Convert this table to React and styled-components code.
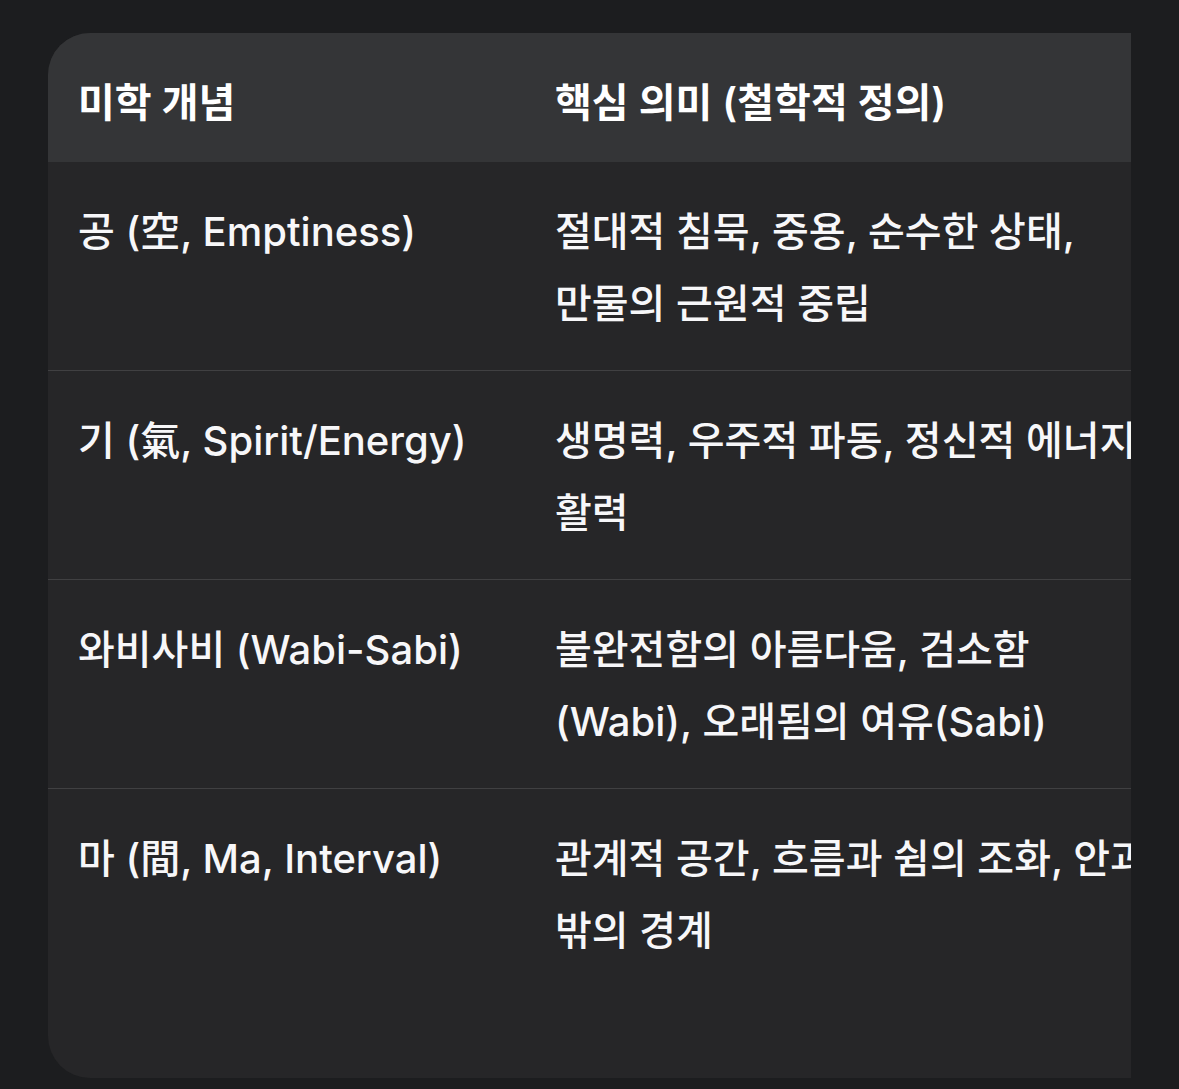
import React from 'react';
import styled, { createGlobalStyle } from 'styled-components';

const GlobalStyle = createGlobalStyle`
    html, body {
        margin: 0;
        padding: 0;
        background-color: #1c1d1f;
    }
    body {
        font-family: "Inter", "Noto Sans CJK KR", sans-serif;
        color: #f5f5f7;
    }
`;

const Page = styled.div`
    padding: 33px 48px 12px;
`;

const Scroller = styled.div`
    overflow: hidden;
`;

const Card = styled.div`
    width: 1200px;
    background-color: #262628;
    border-radius: 42px;
    overflow: hidden;
    padding-bottom: 81px;
`;

const Table = styled.table`
    width: 100%;
    border-collapse: collapse;
    table-layout: fixed;
`;

const HeadCell = styled.th`
    box-sizing: border-box;
    background-color: #343537;
    text-align: left;
    font-size: 40px;
    font-weight: 600;
    line-height: 64px;
    padding: 38px 30px 27px;
    width: ${props => props.$width || 'auto'};
    color: #ffffff;
    white-space: nowrap;
`;

const Row = styled.tr`
    border-top: ${props => props.$first ? 'none' : '1px solid #404042'};
`;

const Cell = styled.td`
    box-sizing: border-box;
    vertical-align: top;
    font-size: 40px;
    font-weight: 500;
    line-height: 72px;
    padding: 34px 30px 30px;
    color: #f7f7f9;
    white-space: nowrap;
`;

const rows = [
    { term: '공 (空, Emptiness)', lines: ['절대적 침묵, 중용, 순수한 상태,', '만물의 근원적 중립'] },
    { term: '기 (氣, Spirit/Energy)', lines: ['생명력, 우주적 파동, 정신적 에너지,', '활력'] },
    { term: '와비사비 (Wabi-Sabi)', lines: ['불완전함의 아름다움, 검소함', '(Wabi), 오래됨의 여유(Sabi)'] },
    { term: '마 (間, Ma, Interval)', lines: ['관계적 공간, 흐름과 쉼의 조화, 안과', '밖의 경계'] },
];

const App = () => {
    return (
        <Page>
            <GlobalStyle />
            <Scroller>
                <Card>
                    <Table>
                        <thead>
                            <tr>
                                <HeadCell $width="477px">미학 개념</HeadCell>
                                <HeadCell>핵심 의미 (철학적 정의)</HeadCell>
                            </tr>
                        </thead>
                        <tbody>
                            {rows.map((r, i) => (
                                <Row key={r.term} $first={i === 0}>
                                    <Cell>{r.term}</Cell>
                                    <Cell>
                                        {r.lines.map((l, j) => (
                                            <React.Fragment key={j}>
                                                {j > 0 && <br />}
                                                {l}
                                            </React.Fragment>
                                        ))}
                                    </Cell>
                                </Row>
                            ))}
                        </tbody>
                    </Table>
                </Card>
            </Scroller>
        </Page>
    );
};

export default App;
